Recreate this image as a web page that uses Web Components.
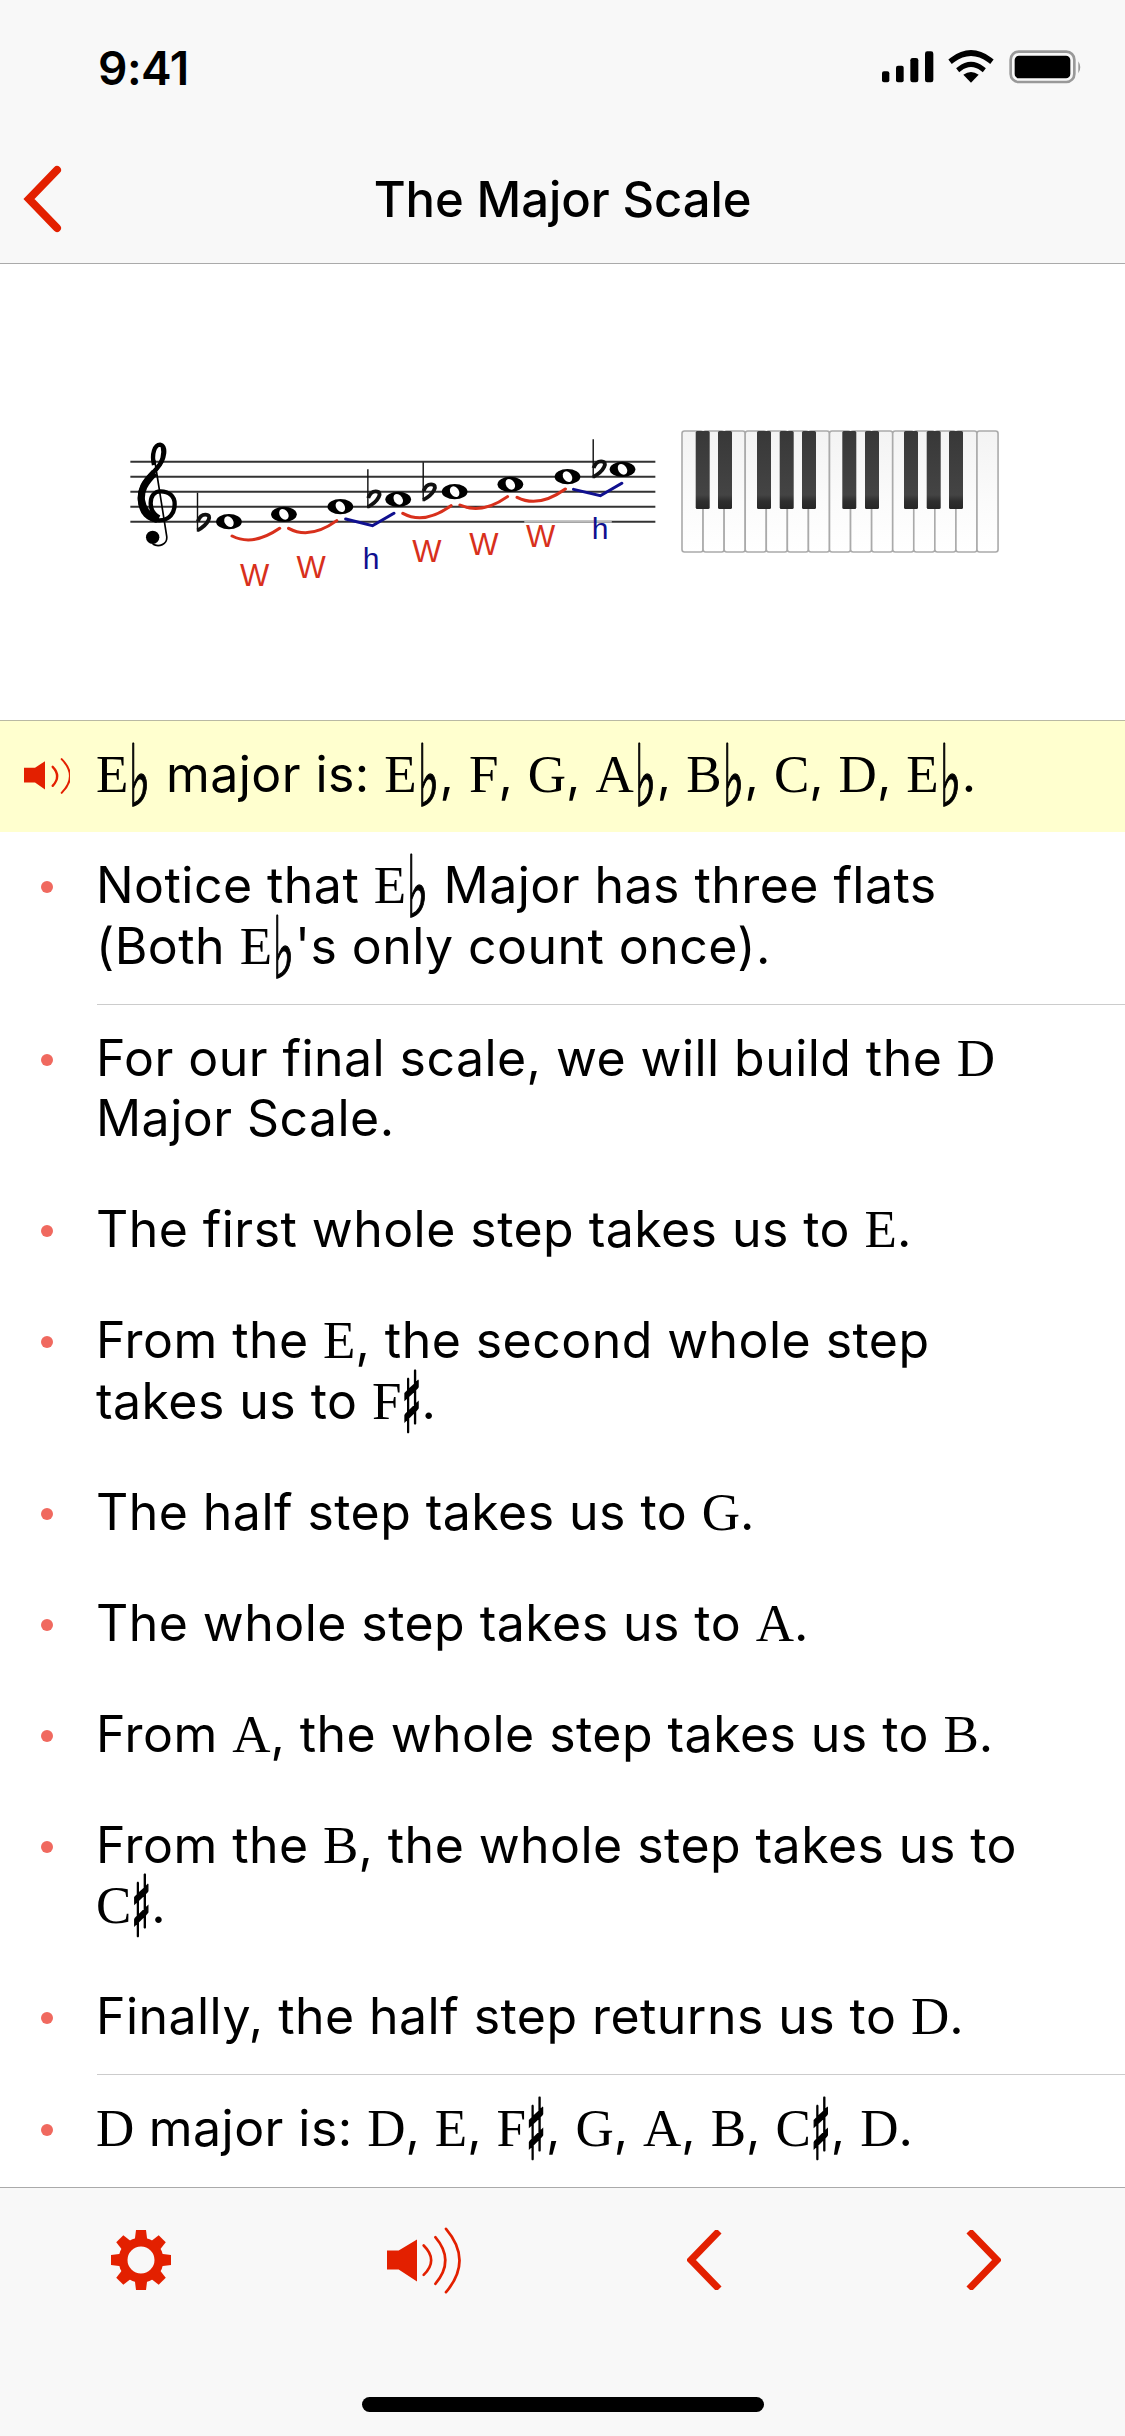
<!DOCTYPE html>
<html lang="en">
<head>
<meta charset="utf-8">
<title>The Major Scale</title>
<style>
    html, body { margin: 0; padding: 0; background: #fff; }
    body { font-family: Inter, "Liberation Sans", sans-serif; color: #000; }
</style>
</head>
<body>
<app-screen>
    <status-bar slot="top"></status-bar>
    <nav-bar slot="top">The Major Scale</nav-bar>
    <score-panel></score-panel>
    <step-row playing><note-name>E♭</note-name> major is: <note-name>E♭</note-name>, <note-name>F</note-name>, <note-name>G</note-name>, <note-name>A♭</note-name>, <note-name>B♭</note-name>, <note-name>C</note-name>, <note-name>D</note-name>, <note-name>E♭</note-name>.</step-row>
    <step-row divider>Notice that <note-name>E♭</note-name> Major has three flats (Both <note-name>E♭</note-name>'s only count once).</step-row>
    <step-row>For our final scale, we will build the <note-name>D</note-name> Major Scale.</step-row>
    <step-row>The first whole step takes us to <note-name>E</note-name>.</step-row>
    <step-row>From the <note-name>E</note-name>, the second whole step takes us to <note-name>F♯</note-name>.</step-row>
    <step-row>The half step takes us to <note-name>G</note-name>.</step-row>
    <step-row>The whole step takes us to <note-name>A</note-name>.</step-row>
    <step-row>From <note-name>A</note-name>, the whole step takes us to <note-name>B</note-name>.</step-row>
    <step-row>From the <note-name>B</note-name>, the whole step takes us to <note-name>C♯</note-name>.</step-row>
    <step-row divider>Finally, the half step returns us to <note-name>D</note-name>.</step-row>
    <step-row><note-name>D</note-name> major is: <note-name>D</note-name>, <note-name>E</note-name>, <note-name>F♯</note-name>, <note-name>G</note-name>, <note-name>A</note-name>, <note-name>B</note-name>, <note-name>C♯</note-name>, <note-name>D</note-name>.</step-row>
    <tool-bar slot="bottom"></tool-bar>
</app-screen>

<script>
const RED = "#e32000";

class AppScreen extends HTMLElement {
    constructor() {
        super();
        this.attachShadow({ mode: "open" });
        this.shadowRoot.innerHTML = `
            <style>
                :host { display: flex; flex-direction: column; width: 1125px; height: 2436px; overflow: hidden; background: #fff; }
                main { flex: 1; min-height: 0; }
            </style>
            <slot name="top"></slot>
            <main><slot></slot></main>
            <slot name="bottom"></slot>
        `;
    }
}

class StatusBar extends HTMLElement {
    constructor() {
        super();
        this.attachShadow({ mode: "open" });
        this.shadowRoot.innerHTML = `
            <style>
                :host { display: flex; justify-content: space-between; align-items: center; height: 135px; padding: 0 34px 0 98px; background: #f8f8f8; }
                .time { font: 600 46px/1 Inter, "Liberation Sans", sans-serif; letter-spacing: -0.5px; }
                svg { display: block; }
            </style>
            <span class="time">9:41</span>
            <svg width="220" height="60" viewBox="0 0 660 180">
                <rect x="33" y="100" width="22" height="33" rx="6"/>
                <rect x="75" y="83" width="23" height="50" rx="6"/>
                <rect x="118" y="60" width="24" height="73" rx="7"/>
                <rect x="162" y="40" width="25" height="93" rx="7"/>
                <path d="M244 66 Q300 24 356 66" fill="none" stroke="#000" stroke-width="17" stroke-linecap="square"/>
                <path d="M266 92 Q300 66 334 92" fill="none" stroke="#000" stroke-width="15" stroke-linecap="square"/>
                <path d="M300 134 L277 110 Q300 94 323 110 Z"/>
                <rect x="419" y="41" width="191" height="91" rx="24" fill="none" stroke="#999" stroke-width="8"/>
                <rect x="431" y="53" width="167" height="68" rx="13"/>
                <path d="M622 70 Q634 88 622 106 Z" fill="#999"/>
            </svg>
        `;
    }
}

class NavBar extends HTMLElement {
    constructor() {
        super();
        this.attachShadow({ mode: "open" });
        this.shadowRoot.innerHTML = `
            <style>
                :host { display: grid; grid-template-columns: 1fr auto 1fr; align-items: center; height: 128px; background: #f8f8f8; border-bottom: 1px solid #aaa; }
                h1 { margin: 0; font: 500 49px/1 Inter, "Liberation Sans", sans-serif; letter-spacing: -0.1px; }
                svg { display: block; margin-left: 23px; }
            </style>
            <svg width="42" height="68" viewBox="0 0 42 68">
                <path d="M34 5 L6 34 L34 63" fill="none" stroke="${RED}" stroke-width="8" stroke-linecap="round"/>
            </svg>
            <h1><slot></slot></h1>
        `;
    }
}

class ScorePanel extends HTMLElement {
    constructor() {
        super();
        this.attachShadow({ mode: "open" });
        this.shadowRoot.innerHTML = `
            <style>
                :host { display: flex; align-items: center; gap: 11px; height: 456px; padding-left: 110px; background: #fff; }
            </style>
            <staff-figure></staff-figure>
            <piano-keys></piano-keys>
        `;
    }
}

class StaffFigure extends HTMLElement {
    constructor() {
        super();
        this.attachShadow({ mode: "open" });
        const notes = [[333, 335], [487, 313], [645, 290], [807, 268], [965, 245], [1121, 223], [1281, 200], [1435, 178]];
        const flats = [[245, 248], [722, 178], [877, 157], [1353, 88]];
        const lines = [155, 200, 245, 290, 335];
        const whole = ["M342 378 Q400 410 475 355", "M500 355 Q560 390 635 332", "M820 310 Q880 345 955 287", "M980 285 Q1040 315 1113 260", "M1140 262 Q1200 295 1275 237"];
        const half = ["M660 327 L735 347 L795 310", "M1298 238 L1373 257 L1433 220"];
        const labels = [["W", 405, 527, "r"], ["W", 563, 505, "r"], ["h", 731, 478, "b"], ["W", 887, 457, "r"], ["W", 1047, 434, "r"], ["W", 1206, 412, "r"], ["h", 1372, 387, "b"]];
        this.shadowRoot.innerHTML = `
            <style>
                :host { display: block; width: 560px; height: 200px; flex: none; }
                svg { display: block; }
                text { font-family: "Liberation Sans", Arial, sans-serif; font-size: 30px; }
                .r { fill: #d8301c; font-size: 31px; }
                .b { fill: #10108f; }
            </style>
            <svg width="560" height="200" viewBox="0 0 560 200">
                <g transform="translate(0 18)">
                    <g transform="scale(0.35714 0.33333)">
                        ${lines.map((y) => `<line x1="57" x2="1527" y1="${y}" y2="${y}" stroke="#333" stroke-width="6"/>`).join("")}
                        <line x1="1160" x2="1405" y1="335" y2="335" stroke="#bbb" stroke-width="6"/>
                        ${flats.map(([x, y]) => `<g transform="translate(${x} ${y})" fill="none" stroke="#111">
                            <line x1="0" x2="0" y1="0" y2="117" stroke-width="4"/>
                            <path d="M0 113 C30 96 44 66 22 66 C12 66 5 74 1 86" stroke-width="11"/>
                        </g>`).join("")}
                        ${notes.map(([x, y]) => `<g transform="translate(${x} ${y})">
                            <ellipse rx="36" ry="23" fill="#000"/>
                            <ellipse rx="12" ry="17" fill="#fff" transform="rotate(-28)"/>
                        </g>`).join("")}
                        ${whole.map((d) => `<path d="${d}" fill="none" stroke="#d8301c" stroke-width="9" stroke-linecap="round"/>`).join("")}
                        ${half.map((d) => `<path d="${d}" fill="none" stroke="#10108f" stroke-width="9" stroke-linecap="round"/>`).join("")}
                    </g>
                    <g transform="translate(10 20) scale(0.33333)" fill="none" stroke="#000">
                        <path d="M102 105 C94 72 104 44 120 44 C140 46 136 88 110 116 C82 146 60 168 60 205 C60 250 85 271 118 271 C148 271 164 250 164 222 C164 198 146 184 122 184 C102 184 92 200 92 220 C92 238 102 254 118 262" stroke-width="13"/>
                        <path d="M104 128 C72 160 62 180 64 210 C68 240 88 262 112 268" stroke-width="22"/>
                        <path d="M128 50 C134 76 124 100 108 118" stroke-width="12"/>
                        <path d="M104 90 L140 318 C144 345 115 352 98 342" stroke-width="5"/>
                        <circle cx="98" cy="322" r="20" fill="#000" stroke="none"/>
                    </g>
                    ${labels.map(([t, x, y, c]) => `<text class="${c}" x="${(x * 0.35714).toFixed(1)}" y="${(y * 0.33333).toFixed(1)}" text-anchor="middle">${t}</text>`).join("")}
                </g>
            </svg>
        `;
    }
}

class PianoKeys extends HTMLElement {
    constructor() {
        super();
        this.attachShadow({ mode: "open" });
        const whites = Array.from({ length: 15 }, (_, i) => i);
        const blacks = [128, 195, 312, 380, 447, 568, 636, 753, 821, 888];
        this.shadowRoot.innerHTML = `
            <style>
                :host { display: block; width: 320px; height: 124px; flex: none; }
                svg { display: block; }
            </style>
            <svg width="320" height="124" viewBox="0 0 320 124">
                <defs>
                    <linearGradient id="white" x1="0" x2="0" y1="0" y2="1">
                        <stop offset="0" stop-color="#f3f3f3"/><stop offset="0.6" stop-color="#fbfbfb"/><stop offset="1" stop-color="#fff"/>
                    </linearGradient>
                    <linearGradient id="black" x1="0" x2="0" y1="0" y2="1">
                        <stop offset="0" stop-color="#383838"/><stop offset="0.82" stop-color="#444"/><stop offset="0.9" stop-color="#2e2e2e"/><stop offset="1" stop-color="#262626"/>
                    </linearGradient>
                </defs>
                ${whites.map((i) => `<rect x="${(1 + i * 21.07).toFixed(2)}" y="1" width="21.07" height="121" rx="2.5" fill="url(#white)" stroke="#aaa" stroke-width="1.6"/>`).join("")}
                ${blacks.map((x) => `<rect x="${(x / 3 - 28).toFixed(1)}" y="1" width="14" height="78" rx="1.5" fill="url(#black)"/>`).join("")}
            </svg>
        `;
    }
}

class StepRow extends HTMLElement {
    constructor() {
        super();
        this.attachShadow({ mode: "open" });
        this.shadowRoot.innerHTML = `
            <style>
                :host { display: block; background: #fff; }
                :host([playing]) { background: #ffffcf; border-top: 1px solid #b9b9a4; }
                .row { display: flex; padding: 25px 85px 25.5px 0; }
                .mark { flex: none; width: 96px; height: 60px; display: flex; align-items: center; justify-content: center; box-sizing: border-box; padding-right: 2px; }
                .dot { width: 12px; height: 12px; border-radius: 50%; background: #f0695f; }
                .text { font: 400 50px/60.5px Inter, "Liberation Sans", sans-serif; letter-spacing: 0.45px; color: #000; margin-top: -2px; margin-bottom: 2px; }
                .rule { display: none; height: 1px; margin-left: 97px; background: #ccc; }
                :host([divider]) .rule { display: block; }
                svg { display: block; }
            </style>
            <div class="row">
                <div class="mark">${this.hasAttribute("playing") ? `
                    <svg width="46" height="36" viewBox="42 50 138 105">
                        <path d="M42 78 H75 L105 58 V143 L75 122 H42 Z" fill="${RED}"/>
                        <path d="M128 75 Q155 103 128 132" fill="none" stroke="${RED}" stroke-width="7" stroke-linecap="round"/>
                        <path d="M155 52 Q205 103 155 153" fill="none" stroke="${RED}" stroke-width="6" stroke-linecap="round"/>
                    </svg>` : `<span class="dot"></span>`}</div>
                <div class="text"><slot></slot></div>
            </div>
            <div class="rule"></div>
        `;
    }
}

class NoteName extends HTMLElement {
    constructor() {
        super();
        this.attachShadow({ mode: "open" });
    }

    connectedCallback() {
        const value = this.textContent.trim();
        const letter = value.charAt(0);
        const accidental = value.slice(1);
        const sign = accidental ? `<span class="acc ${accidental === "♭" ? "flat" : "sharp"}">${accidental}</span>` : "";
        this.shadowRoot.innerHTML = `<style>
                :host { display: inline; font-family: "Liberation Serif", serif; font-size: 53px; line-height: 0; letter-spacing: 0; }
                .acc { display: inline-block; font-family: "DejaVu Sans", sans-serif; line-height: 0; text-align: center; }
                .flat { font-size: 44px; width: 23px; transform: translate(0, 0) scale(1.05, 1.95); -webkit-text-stroke: 0.7px #000; }
                .sharp { font-size: 42px; width: 20px; transform: translate(0, -1px) scale(1, 2); -webkit-text-stroke: 1.2px #000; }
            </style>${letter}${sign}`;
    }
}

class ToolBar extends HTMLElement {
    constructor() {
        super();
        this.attachShadow({ mode: "open" });
        const teeth = Array.from({ length: 8 }, (_, i) => i * 45);
        this.shadowRoot.innerHTML = `
            <style>
                :host { display: block; background: #f8f8f8; border-top: 1px solid #aaa; height: 248px; }
                .buttons { display: grid; grid-template-columns: repeat(4, 1fr); height: 144px; place-items: center; }
                .home { width: 402px; height: 15px; border-radius: 8px; background: #000; margin: 65px auto 0; }
                svg { display: block; }
                .sound { margin-left: 6px; }
                .back { margin-left: 3px; }
                .forward { margin-right: 3px; }
            </style>
            <div class="buttons">
                <svg width="60" height="60" viewBox="-30 -30 60 60">
                    ${teeth.map((a) => `<path d="M-5 -30 H5 L6.5 -18 H-6.5 Z" fill="${RED}" transform="rotate(${a})"/>`).join("")}
                    <circle r="18" fill="none" stroke="${RED}" stroke-width="9"/>
                </svg>
                <svg class="sound" width="75" height="67" viewBox="860 35 225 200">
                    <path d="M860 105 H895 L950 72 V198 L895 162 H860 Z" fill="${RED}"/>
                    <path d="M970 90 Q1015 134 970 178" fill="none" stroke="${RED}" stroke-width="8" stroke-linecap="round"/>
                    <path d="M1005 65 Q1065 135 1005 205" fill="none" stroke="${RED}" stroke-width="8" stroke-linecap="round"/>
                    <path d="M1037 40 Q1118 135 1037 230" fill="none" stroke="${RED}" stroke-width="8" stroke-linecap="round"/>
                </svg>
                <svg class="back" width="36" height="60" viewBox="0 0 36 60">
                    <path d="M32 1 L4 30 L32 59" fill="none" stroke="${RED}" stroke-width="7"/>
                </svg>
                <svg class="forward" width="36" height="60" viewBox="0 0 36 60">
                    <path d="M4 1 L32 30 L4 59" fill="none" stroke="${RED}" stroke-width="7"/>
                </svg>
            </div>
            <div class="home"></div>
        `;
    }
}

customElements.define("app-screen", AppScreen);
customElements.define("status-bar", StatusBar);
customElements.define("nav-bar", NavBar);
customElements.define("score-panel", ScorePanel);
customElements.define("staff-figure", StaffFigure);
customElements.define("piano-keys", PianoKeys);
customElements.define("step-row", StepRow);
customElements.define("note-name", NoteName);
customElements.define("tool-bar", ToolBar);
</script>
</body>
</html>
